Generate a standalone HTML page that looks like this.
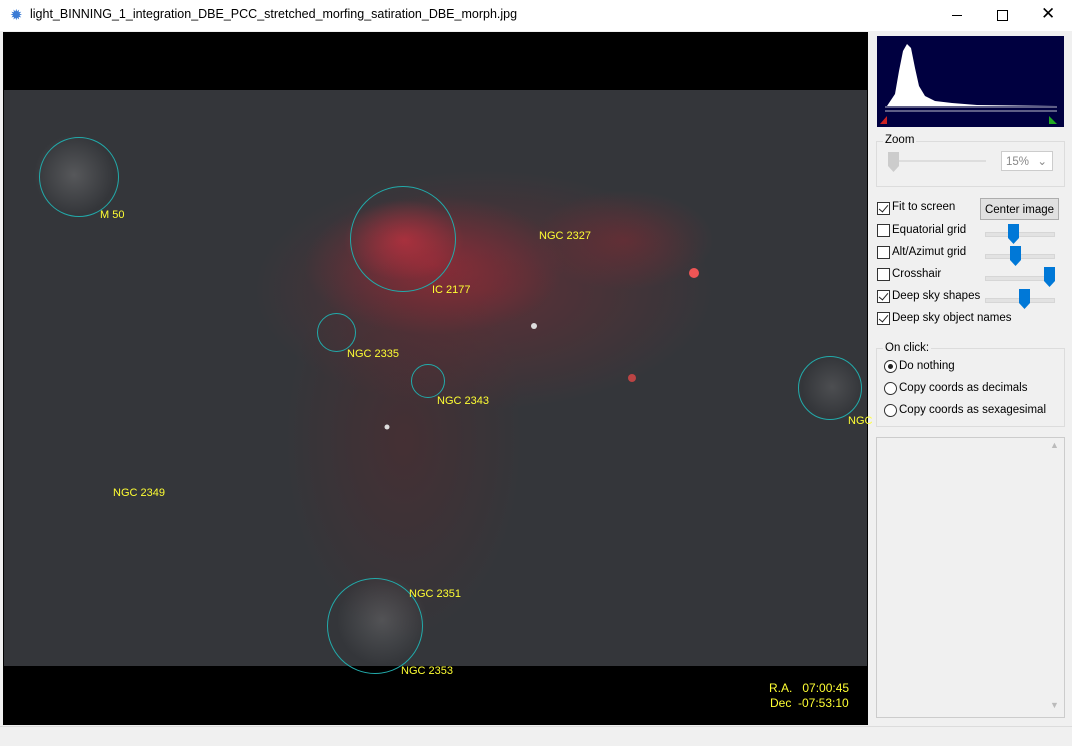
<!DOCTYPE html><html><head><style>
body{margin:0;width:1072px;height:746px;background:#f0f0f0;font-family:"Liberation Sans",sans-serif;font-size:11.5px;position:relative;overflow:hidden;color:#000}
.a{position:absolute}
.t{white-space:nowrap}
.cb{position:absolute;width:11px;height:11px;border:1px solid #333;background:#fff}
.cb.c::after{content:"";position:absolute;left:3px;top:0px;width:4px;height:8px;border:solid #222;border-width:0 1.5px 1.5px 0;transform:rotate(40deg)}
.rb{position:absolute;width:11px;height:11px;border:1px solid #333;border-radius:50%;background:#fff}
.tr{position:absolute;height:3px;background:#e2e2e2;border:1px solid #d6d6d6;width:68px}
.th{position:absolute;width:11px;height:20px;background:#0078d7;clip-path:polygon(0 0,100% 0,100% 70%,50% 100%,0 70%)}
.lb{position:absolute;color:#ff3;font-size:11px;white-space:nowrap}
.ci{position:absolute;border:1.2px solid #2aa;border-radius:50%}
</style></head><body>
<div class="a" style="left:0;top:0;width:1072px;height:31px;background:#fff"></div>
<div class="a t" style="left:10px;top:6px;font-size:15px;color:#3a7bd5">✹</div>
<div class="a t" style="left:30px;top:7px;font-size:12.5px">light_BINNING_1_integration_DBE_PCC_stretched_morfing_satiration_DBE_morph.jpg</div>
<div class="a" style="left:952px;top:15px;width:10px;height:1px;background:#000"></div>
<div class="a" style="left:997px;top:10px;width:9px;height:9px;border:1px solid #000"></div>
<div class="a t" style="left:1041px;top:4px;font-size:17px">✕</div>
<div class="a" style="left:3px;top:32px;width:865px;height:693px;background:#000"></div>
<div class="a" style="left:4px;top:90px;width:863px;height:576px;background:
radial-gradient(circle 40px at 70px 85px,rgba(150,150,150,.35),transparent),
radial-gradient(circle 45px at 378px 530px,rgba(150,150,150,.3),transparent),
radial-gradient(circle 30px at 828px 297px,rgba(150,150,150,.25),transparent),
radial-gradient(ellipse 60px 40px at 400px 150px,rgba(210,50,65,.6),transparent),
radial-gradient(ellipse 130px 70px at 430px 175px,rgba(180,40,55,.55),transparent),
radial-gradient(ellipse 230px 120px at 480px 200px,rgba(140,40,50,.45),transparent),
radial-gradient(ellipse 120px 200px at 400px 350px,rgba(100,35,40,.35),transparent),
radial-gradient(ellipse 90px 50px at 620px 150px,rgba(140,40,50,.45),transparent),
#34363a"></div>
<svg class="a" style="left:4px;top:90px" width="863" height="576">
<g fill="#ddd">
<circle cx="530" cy="236" r="3"/><circle cx="383" cy="337" r="2.5"/>
<circle cx="690" cy="183" r="5" fill="#e55"/><circle cx="628" cy="288" r="4" fill="#b44"/>
</g></svg>
<div class="ci" style="left:39px;top:137px;width:78px;height:78px"></div>
<div class="ci" style="left:350px;top:186px;width:104px;height:104px"></div>
<div class="ci" style="left:317px;top:313px;width:37px;height:37px"></div>
<div class="ci" style="left:411px;top:364px;width:32px;height:32px"></div>
<div class="ci" style="left:798px;top:356px;width:62px;height:62px"></div>
<div class="ci" style="left:327px;top:578px;width:94px;height:94px"></div>
<div class="lb" style="left:100px;top:209px">M 50</div>
<div class="lb" style="left:539px;top:230px">NGC 2327</div>
<div class="lb" style="left:432px;top:284px">IC 2177</div>
<div class="lb" style="left:347px;top:348px">NGC 2335</div>
<div class="lb" style="left:437px;top:395px">NGC 2343</div>
<div class="lb" style="left:848px;top:415px">NGC</div>
<div class="lb" style="left:113px;top:487px">NGC 2349</div>
<div class="lb" style="left:409px;top:588px">NGC 2351</div>
<div class="lb" style="left:401px;top:665px">NGC 2353</div>
<div class="lb" style="left:769px;top:681px;font-size:12px">R.A.&nbsp;&nbsp;&nbsp;07:00:45</div>
<div class="lb" style="left:770px;top:696px;font-size:12px">Dec&nbsp;&nbsp;-07:53:10</div>
<div class="a" style="left:877px;top:36px;width:187px;height:91px;background:#000040"></div>
<svg class="a" style="left:877px;top:36px" width="187" height="91"><path d="M10 70 L18 58 L22 35 L26 15 L30 8 L34 12 L38 32 L42 50 L48 60 L58 65 L75 67 L100 69 L180 70 Z" fill="#fff"/><line x1="8" y1="71" x2="180" y2="71" stroke="#bbc"/><line x1="8" y1="75" x2="180" y2="75" stroke="#bbc"/><path d="M3 88 L10 80 L10 88Z" fill="#c22"/><path d="M172 80 L180 88 L172 88Z" fill="#2a2"/></svg>
<div class="a" style="left:876px;top:141px;width:187px;height:44px;border:1px solid #dcdcdc"></div>
<div class="a t" style="left:883px;top:134px;background:#f0f0f0;padding:0 2px">Zoom</div>
<div class="a" style="left:890px;top:160px;width:96px;height:2px;background:#ddd"></div>
<div class="th" style="left:888px;top:152px;background:#ccc"></div>
<div class="a t" style="left:1001px;top:151px;width:52px;height:20px;border:1px solid #ccc;background:#fff;color:#888;line-height:20px;padding-left:4px;box-sizing:border-box">15%<span style="float:right;padding-right:5px">⌄</span></div>
<div class="cb c" style="left:877px;top:202px"></div><div class="a t" style="left:892px;top:201px">Fit to screen</div>
<div class="a t" style="left:980px;top:198px;width:79px;height:22px;border:1px solid #adadad;background:#e1e1e1;text-align:center;line-height:22px;box-sizing:border-box">Center image</div>
<div class="cb" style="left:877px;top:224px"></div><div class="a t" style="left:892px;top:224px">Equatorial grid</div>
<div class="cb" style="left:877px;top:246px"></div><div class="a t" style="left:892px;top:246px">Alt/Azimut grid</div>
<div class="cb" style="left:877px;top:268px"></div><div class="a t" style="left:892px;top:268px">Crosshair</div>
<div class="cb c" style="left:877px;top:290px"></div><div class="a t" style="left:892px;top:290px">Deep sky shapes</div>
<div class="cb c" style="left:877px;top:312px"></div><div class="a t" style="left:892px;top:312px">Deep sky object names</div>
<div class="tr" style="left:985px;top:232px"></div><div class="th" style="left:1008px;top:224px"></div>
<div class="tr" style="left:985px;top:254px"></div><div class="th" style="left:1010px;top:246px"></div>
<div class="tr" style="left:985px;top:276px"></div><div class="th" style="left:1044px;top:267px"></div>
<div class="tr" style="left:985px;top:298px"></div><div class="th" style="left:1019px;top:289px"></div>
<div class="a" style="left:876px;top:348px;width:187px;height:77px;border:1px solid #dcdcdc"></div>
<div class="a t" style="left:883px;top:342px;background:#f0f0f0;padding:0 2px">On click:</div>
<div class="rb" style="left:884px;top:360px"><div class="a" style="left:3px;top:3px;width:5px;height:5px;border-radius:50%;background:#222"></div></div><div class="a t" style="left:899px;top:360px">Do nothing</div>
<div class="rb" style="left:884px;top:382px"></div><div class="a t" style="left:899px;top:382px">Copy coords as decimals</div>
<div class="rb" style="left:884px;top:404px"></div><div class="a t" style="left:899px;top:404px">Copy coords as sexagesimal</div>
<div class="a" style="left:876px;top:437px;width:187px;height:279px;border:1px solid #ccc;background:#f0f0f0"></div>
<div class="a t" style="left:1050px;top:440px;color:#bbb;font-size:9px">▲</div>
<div class="a t" style="left:1050px;top:700px;color:#bbb;font-size:9px">▼</div>
<div class="a" style="left:0;top:726px;width:1072px;height:1px;background:#dcdcdc"></div>
</body></html>
